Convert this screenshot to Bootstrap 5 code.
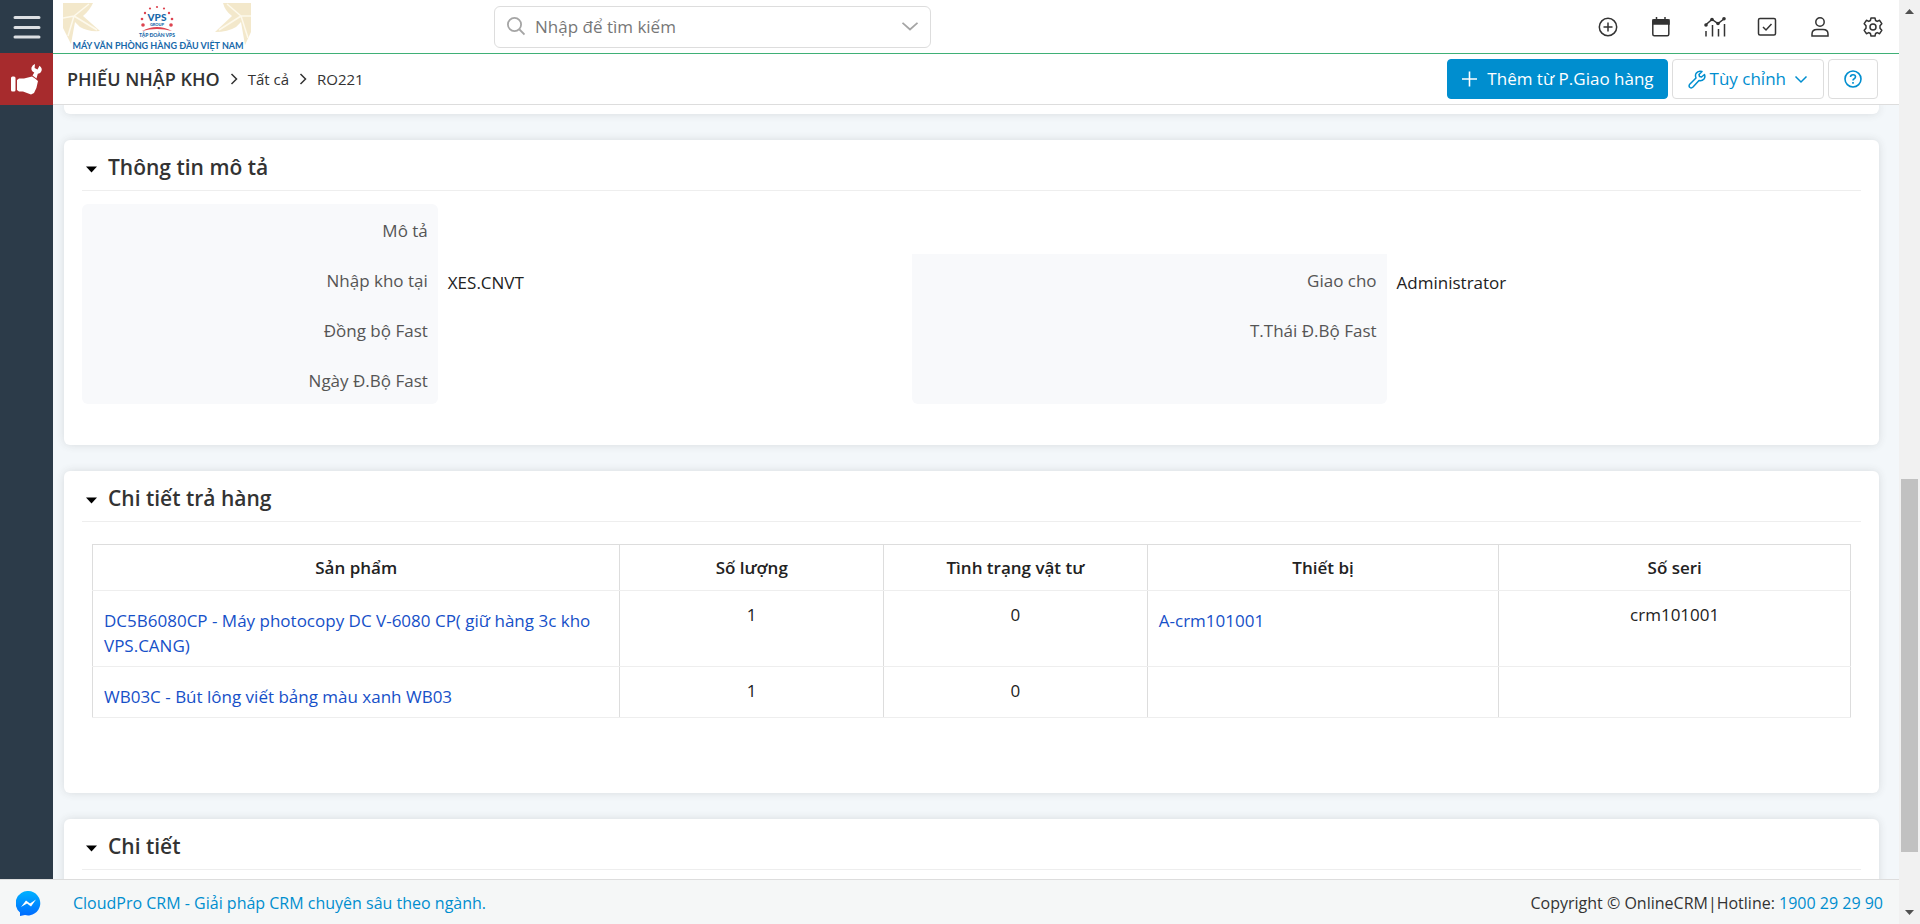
<!DOCTYPE html>
<html lang="vi">
<head>
<meta charset="utf-8">
<meta name="viewport" content="width=device-width, initial-scale=1">
<title>Phiếu nhập kho - RO221</title>
<link href="https://cdn.jsdelivr.net/npm/bootstrap@5.3.0/dist/css/bootstrap.min.css" rel="stylesheet">
<script src="https://cdn.jsdelivr.net/npm/bootstrap@5.3.0/dist/js/bootstrap.bundle.min.js" defer></script>
<style>
  :root { --blue: #008ecf; --navy: #2c3b49; --line: #ddd; --soft: #eee; }
  body { font-family: "Open Sans", "Noto Sans", sans-serif; font-size: 17px; line-height: 24px; color: #333; background: #f3f7fa; }
  a { text-decoration: none; }
  svg { display: block; flex: none; }
  .fit { min-width: 0; min-height: 0; }
  .rail { width: 53px; background: var(--navy); }
  .rail button { height: 53px; border: 0; padding: 0; }
  .rail .menu-btn { background: none; }
  .rail .module-btn { height: 52px; background: #a72b2d; }
  .topbar { height: 54px; background: #fff; border-bottom: 1px solid #3fb076; padding: 0 12px 0 10px; }
  .brand { width: 431px; }
  .search { width: 437px; height: 42px; border: 1px solid var(--line); border-radius: 6px; padding: 0 12px; }
  .search input { border: 0; outline: 0; background: none; min-width: 0; color: #777; }
  .search input::placeholder { color: #777; opacity: 1; }
  .tools { gap: 25px; }
  .tools button { border: 0; background: none; padding: 4px; width: 28px; height: 28px; color: #333; }
  .crumbbar { height: 51px; background: #fff; border-bottom: 1px solid var(--line); padding: 0 21px 0 14px; }
  .crumbs { font-size: 15px; }
  .crumbs h1 { font-size: 18px; font-weight: 600; line-height: 24px; margin: 0; }
  .crumbs a { color: #333; }
  .actions .btn { height: 40px; font-size: 17px; line-height: 24px; border-radius: 4px; padding: 0 15px; color: var(--blue); border: 1px solid var(--line); background: #fff; }
  .actions .btn.add { background: var(--blue); border-color: var(--blue); color: #fff; padding: 0 13px; }
  .sheet { padding: 0 20px 0 11px; }
  .panel { background: #fff; border-radius: 6px; box-shadow: 0 0 8px rgba(60, 60, 60, .14); padding: 0 18px; margin-bottom: 26px; }
  .panel.tail { height: 9px; border-radius: 0 0 6px 6px; }
  .panel h2 { height: 51px; margin: 0; padding: 3px 0 0 4px; font-size: 21px; font-weight: 600; line-height: 24px; border-bottom: 1px solid var(--soft); gap: 11px; }
  .caret { width: 11px; height: 7px; color: #000; margin-top: 5px; }
  .fields { display: grid; grid-template-columns: 3fr 4fr 4fr 4fr; grid-auto-rows: 50px; padding: 13px 0 41px; }
  .fields > * { padding: 15px 10px 0; }
  .fields .name { background: #f8f9fb; text-align: right; color: #555; }
  .fields .value { color: #222; padding-top: 17px; }
  .r-top { border-radius: 6px 6px 0 0; }
  .r-bottom { border-radius: 0 0 6px 6px; }
  .lines { padding: 22px 10px 75px; }
  .lines table { table-layout: fixed; border: 1px solid var(--line); border-bottom-color: var(--soft); color: #222; }
  .lines th, .lines td { padding: 11px; text-align: center; vertical-align: top; border-left: 1px solid var(--line); border-bottom: 1px solid var(--soft); line-height: 25px; }
  .lines th { font-weight: 600; padding: 10px; }
  .lines td.go { text-align: left; padding-top: 17px; padding-bottom: 8px; }
  .lines td a { color: #1650c8; }
  .foot { height: 45px; font-size: 16px; background: #f5f7f7; border-top: 1px solid var(--line); padding: 2px 16px 0; }
  .foot a { color: var(--blue); }
  .scroller { width: 21px; background: #f1f1f1; padding: 9px 2px; }
  .before { flex: 465 0 0; }
  .thumb { flex: 373 0 0; background: #c1c1c1; }
  .after { flex: 58 0 0; }
</style>
</head>
<body class="vh-100 overflow-hidden d-flex">
<div class="fit d-flex flex-column flex-fill">
  <div class="fit d-flex flex-fill">
    <nav class="rail d-flex flex-column flex-shrink-0">
      <button class="menu-btn d-flex align-items-center justify-content-center" aria-label="Menu">
        <svg width="28" height="24" stroke="#dcdfe3" stroke-width="3" stroke-linecap="round"><path d="M2 2.500H26M2 12.500H26M2 22H26"/></svg>
      </button>
      <button class="module-btn d-flex align-items-center justify-content-center" aria-label="Phiếu nhập kho">
        <svg width="32" height="32" viewBox="0 0 32 32" fill="#fff"><rect x="0" y="13.500" width="4.500" height="15" rx="1.500"/><path d="M6 17 8 15.500H13L21 13.500Q24 15 27 18Q26 25 23 30L20 31.500L12 28.500H8L6 27Z"/><path d="M21.500 12.500 23.300 9.500Q19.800 8 20.500 4.500Q21.500 1.500 24 1L23.600 5L26.500 6.500L28.500 2.800Q31.500 5 30.500 8Q29.500 10.800 26.800 10.700L25.500 15.500Z"/></svg>
      </button>
    </nav>
    <div class="fit d-flex flex-column flex-fill">
      <header class="topbar d-flex align-items-center flex-shrink-0">
        <a class="brand flex-shrink-1" href="#" aria-label="VPS">
          <svg width="188" height="50" viewBox="0 0 188 50">
            <g fill="#f3e8cb"><path d="M0 1H30Q27 8 20 14L37 29Q25 30 17 25L12 20L8 42L0 26Z"/><path d="M188 1H160Q162 9 169 14L152 30Q165 30 173 25L178 20L182 43L188 30Z"/></g>
            <g stroke="#fdf9ec" stroke-width="1.500" fill="none"><path d="M0 16 11 14 26 2M11 14 34 28M11 14 5 34M188 14 178 14 164 2M178 14 156 28M178 14 185 36"/></g>
            <g fill="#dd4450"><circle cx="80" cy="23" r="1.800"/><circle cx="79" cy="17" r="1.300"/><circle cx="82" cy="11" r="1.200"/><circle cx="87" cy="6.500" r="1.100"/><circle cx="94" cy="5" r="1.100"/><circle cx="101" cy="6.500" r="1.100"/><circle cx="106" cy="11" r="1.200"/><circle cx="109" cy="17" r="1.300"/><circle cx="108" cy="23" r="1.800"/></g>
            <path d="M79 29Q94 21 109 29Q94 25 79 29" fill="#dd4450"/>
            <g text-anchor="middle" fill="#1768a9" font-family="Lato, sans-serif" font-weight="900">
              <text x="94" y="19" font-size="10">VPS</text>
              <text x="94" y="24" font-size="4">GROUP</text>
              <text x="94" y="35" font-size="5">TẬP ĐOÀN VPS</text>
              <text x="95" y="47" font-size="9" font-weight="700">MÁY VĂN PHÒNG HÀNG ĐẦU VIỆT NAM</text>
            </g>
          </svg>
        </a>
        <form class="search d-flex align-items-center" role="search" onsubmit="return false">
          <svg width="18" height="19" fill="none" stroke="#a5a5a5" stroke-width="1.800"><circle cx="7.500" cy="7.500" r="6.600"/><path d="M12.500 12.500 17.500 17.500"/></svg>
          <input class="flex-fill ms-2" type="text" placeholder="Nhập để tìm kiếm" aria-label="Nhập để tìm kiếm">
          <svg width="16" height="9" fill="none" stroke="#a5a5a5" stroke-width="1.800"><path d="M.5 .8 8 7.500 15.500 .8"/></svg>
        </form>
        <div class="tools d-flex ms-auto">
          <button aria-label="Thêm"><svg width="20" height="20" fill="none" stroke="currentColor" stroke-width="1.500"><circle cx="10" cy="10" r="8.700"/><path d="M10 5.500V14.500M5.500 10H14.500"/></svg></button>
          <button aria-label="Lịch"><svg width="20" height="20" fill="none" stroke="currentColor" stroke-width="1.500"><rect x="1.800" y="2.800" width="16" height="16" rx="1.500"/><path d="M2 3H18V7H2ZM5.500 0V3M14 0V3" fill="currentColor"/></svg></button>
          <button aria-label="Báo cáo"><svg width="22" height="20" fill="none" stroke="currentColor" stroke-width="1.500"><path d="M1.500 8 8 2.500 14 6.500 20.500 1.500M2 14V19.500M8.500 8V19.500M14.500 12V19.500M20.500 7V19.500"/><g fill="currentColor" stroke="none"><circle cx="2" cy="8" r="1.800"/><circle cx="8" cy="2.500" r="1.800"/><circle cx="14" cy="6.500" r="1.800"/><circle cx="20" cy="1.800" r="1.800"/></g></svg></button>
          <button aria-label="Công việc"><svg width="20" height="20" fill="none" stroke="currentColor" stroke-width="1.500"><rect x="1.500" y="1.500" width="17" height="16.500" rx="1.500"/><path d="M6 10 9 13 14.500 7"/></svg></button>
          <button aria-label="Tài khoản"><svg width="20" height="20" fill="none" stroke="currentColor" stroke-width="1.500"><circle cx="10" cy="5" r="4.200"/><path d="M2 19V17Q2 12.500 7 12.500H13Q18 12.500 18 17V19Z"/></svg></button>
          <button aria-label="Cài đặt"><svg width="20" height="20" viewBox="0 0 20 20" fill="none" stroke="currentColor" stroke-width="1.500" stroke-linejoin="round"><path d="M8 1H12L12.600 3.500 14.200 4.400 16.600 3.300 18.800 6.700 17 8.700V11.300L18.800 13.300 16.600 16.700 14.200 15.600 12.600 16.500 12 19H8L7.400 16.500 5.800 15.600 3.400 16.700 1.200 13.300 3 11.300V8.700L1.200 6.700 3.400 3.300 5.800 4.400 7.400 3.500Z"/><circle cx="10" cy="10" r="3"/></svg></button>
        </div>
      </header>
      <div class="crumbbar d-flex align-items-center justify-content-between flex-shrink-0">
        <nav class="crumbs d-flex align-items-center text-nowrap" aria-label="breadcrumb">
          <h1>PHIẾU NHẬP KHO</h1>
          <svg class="mx-2" width="12" height="12" fill="none" stroke="#333" stroke-width="1.500"><path d="M3.500 1 8.500 6 3.500 11"/></svg>
          <a href="#">Tất cả</a>
          <svg class="mx-2" width="12" height="12" fill="none" stroke="#333" stroke-width="1.500"><path d="M3.500 1 8.500 6 3.500 11"/></svg>
          <span>RO221</span>
        </nav>
        <div class="actions d-flex gap-1 text-nowrap">
          <button class="btn add d-flex align-items-center"><svg class="me-2" width="18" height="16" stroke="currentColor" stroke-width="1.600"><path d="M1 8H16M8.500 .5V15.500"/></svg>Thêm từ P.Giao hàng</button>
          <button class="btn d-flex align-items-center"><svg class="me-1" width="18" height="19" fill="none" stroke="currentColor" stroke-width="1.500" stroke-linejoin="round"><path d="M16.500 4.500 13.500 7 11.500 6.500 11 4.500 14 1.500Q10 .3 8 3.500 7 5.500 8 8L1.500 14.500Q.5 16.500 2 17.500 3.500 18.500 5 17L11 10.500Q14 11.200 16 9 17.500 7 16.500 4.500Z"/></svg>Tùy chỉnh<svg class="ms-2" width="14" height="9" fill="none" stroke="currentColor" stroke-width="1.500"><path d="M1.500 1.500 7 7 12.500 1.500"/></svg></button>
          <button class="btn d-flex align-items-center" aria-label="Trợ giúp"><svg width="18" height="18" fill="none" stroke="currentColor" stroke-width="1.600"><circle cx="9" cy="9" r="8"/><path d="M6.500 7Q6.500 4.700 9 4.700 11.500 4.700 11.500 6.800 11.500 8 10.200 8.700 9 9.300 9 10.500M9 12V13.700"/></svg></button>
        </div>
      </div>
      <main class="sheet flex-fill overflow-hidden">
        <div class="panel tail"></div>
        <section class="panel">
          <h2 class="d-flex align-items-center"><svg class="caret" width="11" height="7"><path d="M0 .5H11L5.500 6.500Z"/></svg>Thông tin mô tả</h2>
          <div class="fields">
            <div class="name r-top">Mô tả</div><div class="value"></div><div></div><div></div>
            <div class="name">Nhập kho tại</div><div class="value">XES.CNVT</div><div class="name">Giao cho</div><div class="value">Administrator</div>
            <div class="name">Đồng bộ Fast</div><div class="value"></div><div class="name">T.Thái Đ.Bộ Fast</div><div class="value"></div>
            <div class="name r-bottom">Ngày Đ.Bộ Fast</div><div class="value"></div><div class="name r-bottom"></div><div class="value"></div>
          </div>
        </section>
        <section class="panel">
          <h2 class="d-flex align-items-center"><svg class="caret" width="11" height="7"><path d="M0 .5H11L5.500 6.500Z"/></svg>Chi tiết trả hàng</h2>
          <div class="lines">
            <table class="w-100">
              <colgroup><col style="width:30%"><col style="width:15%"><col style="width:15%"><col style="width:20%"><col style="width:20%"></colgroup>
              <thead><tr><th scope="col">Sản phẩm</th><th scope="col">Số lượng</th><th scope="col">Tình trạng vật tư</th><th scope="col">Thiết bị</th><th scope="col">Số seri</th></tr></thead>
              <tbody>
                <tr><td class="go"><a href="#">DC5B6080CP - Máy photocopy DC V-6080 CP( giữ hàng 3c kho VPS.CANG)</a></td><td>1</td><td>0</td><td class="go"><a href="#">A-crm101001</a></td><td>crm101001</td></tr>
                <tr><td class="go"><a href="#">WB03C - Bút lông viết bảng màu xanh WB03</a></td><td>1</td><td>0</td><td></td><td></td></tr>
              </tbody>
            </table>
          </div>
        </section>
        <section class="panel">
          <h2 class="d-flex align-items-center"><svg class="caret" width="11" height="7"><path d="M0 .5H11L5.500 6.500Z"/></svg>Chi tiết</h2>
          <div class="lines"></div>
        </section>
      </main>
    </div>
  </div>
  <footer class="foot d-flex align-items-center flex-shrink-0">
    <a href="#" aria-label="Messenger"><svg width="25" height="25" viewBox="0 0 25 25"><defs><linearGradient id="msg" x2="0" y2="1"><stop stop-color="#00b2ff"/><stop offset="1" stop-color="#006aff"/></linearGradient></defs><path d="M12.500 0A12.200 12.200 0 1 1 9 24L4 25V21.500A12.200 12.200 0 0 1 12.500 0Z" fill="url(#msg)"/><path d="M5 16 10 9.500 14 12.500 20 8.500 15 15.500 11 12.500Z" fill="#fff"/></svg></a>
    <a class="ms-3 ps-3" href="#">CloudPro CRM - Giải pháp CRM chuyên sâu theo ngành.</a>
    <span class="ms-auto">Copyright © OnlineCRM|Hotline: <a href="#">1900 29 29 90</a></span>
  </footer>
</div>
<div class="scroller d-flex flex-column align-items-center flex-shrink-0" aria-hidden="true">
  <svg width="9" height="5" fill="#505050"><path d="M0 5 4.500 0 9 5Z"/></svg>
  <div class="before"></div>
  <div class="thumb w-100"></div>
  <div class="after"></div>
  <svg width="9" height="5" fill="#505050"><path d="M0 0H9L4.500 5Z"/></svg>
</div>
</body>
</html>
